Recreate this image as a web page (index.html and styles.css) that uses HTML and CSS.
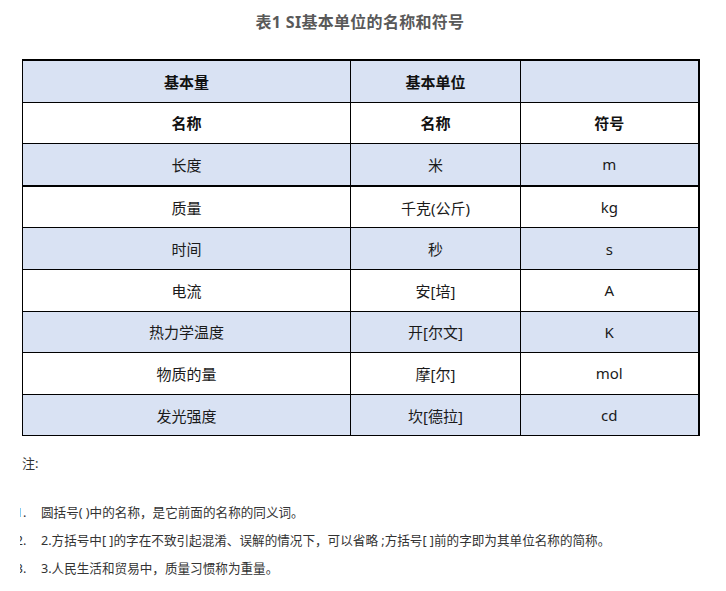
FILE: index.html
```html
<!DOCTYPE html>
<html lang="zh-CN">
<head>
<meta charset="utf-8">
<link rel="stylesheet" href="styles.css">
</head>
<body>
<div class="page">
  <h1 class="title">表1 SI基本单位的名称和符号</h1>
  <table class="si">
    <colgroup>
      <col class="c1"><col class="c2"><col class="c3">
    </colgroup>
    <tr class="shade head"><td>基本量</td><td>基本单位</td><td></td></tr>
    <tr class="head"><td>名称</td><td>名称</td><td>符号</td></tr>
    <tr class="shade thick"><td>长度</td><td>米</td><td>m</td></tr>
    <tr><td>质量</td><td>千克(公斤)</td><td>kg</td></tr>
    <tr class="shade"><td>时间</td><td>秒</td><td>s</td></tr>
    <tr><td>电流</td><td>安[培]</td><td>A</td></tr>
    <tr class="shade"><td>热力学温度</td><td>开[尔文]</td><td>K</td></tr>
    <tr><td>物质的量</td><td>摩[尔]</td><td>mol</td></tr>
    <tr class="shade"><td>发光强度</td><td>坎[德拉]</td><td>cd</td></tr>
  </table>
  <p class="note">注:</p>
  <ol class="notes">
    <li>圆括号( )中的名称，是它前面的名称的同义词。</li>
    <li>2.方括号中[ ]的字在不致引起混淆、误解的情况下，可以省略 ;方括号[ ]前的字即为其单位名称的简称。</li>
    <li>3.人民生活和贸易中，质量习惯称为重量。</li>
  </ol>
</div>
</body>
</html>
```
FILE: styles.css
```css
html, body {
  margin: 0;
  padding: 0;
  background: #ffffff;
}
body {
  font-family: "Noto Sans", "Noto Sans CJK SC", sans-serif;
  color: #222;
}
.page {
  width: 676px;
  margin-left: 22px;
}
.title {
  margin: 0;
  padding-top: 11px;
  height: 59px;
  box-sizing: border-box;
  font-size: 16px;
  line-height: 22px;
  font-weight: bold;
  color: #595959;
  text-align: center;
  letter-spacing: 0.3px;
}
.si {
  width: 677px;
  border-collapse: collapse;
  table-layout: fixed;
  border-top: 2px solid #000;
  border-right: 2px solid #000;
  border-bottom: 1px solid #000;
  border-left: 1px solid #000;
}
.c1 { width: 328px; }
.c2 { width: 170px; }
.c3 { width: 178px; }
.si td {
  border: 1px solid #000;
  height: 40.6px;
  padding: 0;
  text-align: center;
  vertical-align: middle;
  font-size: 15px;
  color: #1a1a1a;
}
.si tr.shade td {
  background: #d9e2f3;
}
.si tr.head td {
  font-weight: bold;
  color: #111;
}
.si tr.thick td {
  border-bottom: 2px solid #000;
}
.si tr:first-child td {
  border-top: 2px solid #000;
}
.si td:last-child {
  border-right: 2px solid #000;
}
.note {
  margin: 17px 0 0 0;
  font-size: 13px;
  line-height: 20px;
  color: #333;
}
.notes {
  margin: 30px 0 0 -2px;
  padding: 0 0 0 21px;
  overflow: hidden;
  list-style: decimal outside;
  font-size: 12.6px;
  color: #333;
}
.notes li {
  line-height: 20px;
  margin-bottom: 8px;
}
.notes li::marker {
  content: counter(list-item) ".\2003\2009 ";
  color: #333;
}
```
